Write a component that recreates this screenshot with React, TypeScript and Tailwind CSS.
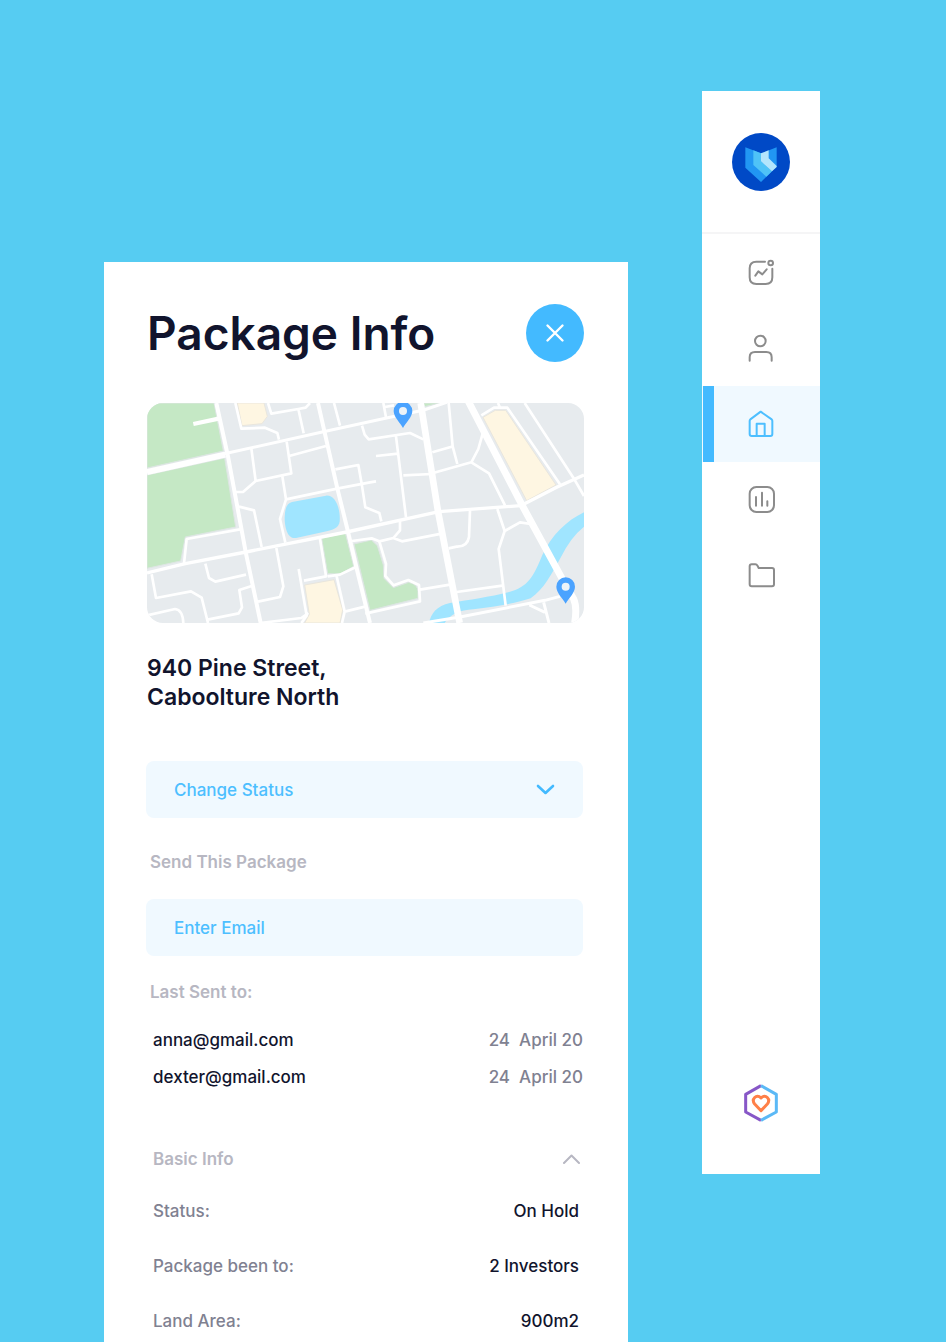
import React, { useState } from "react";

function Pin({ x, y }: { x: number; y: number }) {
  return (
    <g transform={`translate(${x} ${y})`}>
      <path d="M0 51C-8 35-28 19-28 0A28 28 0 0 1 28 0C28 19 8 35 0 51Z" fill="#4ba3ff" />
      <circle r="12" fill="#edf3f8" />
    </g>
  );
}

function StreetMap() {
  return (
    <svg viewBox="21 22 1311 660" className="block h-auto w-full rounded-2xl" role="img" aria-label="Map of Caboolture North">
      <rect x="21" y="22" width="1311" height="660" fill="#e7ebee" />
      <g fill="#c5e8c5" stroke="#dde6e2" strokeWidth="3">
        <path d="M21 22H222L250 166L21 217Z" />
        <path d="M21 238L254 187L287 394L136 424L122 496L21 518Z" />
        <path d="M545 428L616 412L641 512L600 535L563 534Z" />
        <path d="M642 445L694 433L712 450L730 508L732 548L760 576L806 560Q834 566 834 588V608L690 644Z" />
        <path d="M850 22H900L854 33Z" />
      </g>
      <g fill="#fef6e2" stroke="#e9e6dd" strokeWidth="3">
        <path d="M292 22H372L382 62L366 84L306 90Z" />
        <path d="M494 568L582 552L608 642L600 682H494L508 656Z" />
        <path d="M1029 65L1066 44H1097L1248 268L1160 315Z" />
      </g>
      <path d="M456 319L558 300C584 297 602 335 599 377C597 395 585 401 560 407L468 427C442 431 434 395 434 366Q434 324 456 319Z" fill="#a0e5ff" />
      <path d="M1332 350C1280 375 1235 418 1207 478C1180 545 1162 574 1110 588C1045 605 990 611 930 622C890 630 872 655 867 682H914C930 656 960 643 1000 641C1070 631 1130 623 1172 608C1212 580 1235 535 1263 484Q1292 425 1332 393Z" fill="#a0e5ff" />
      <g fill="none" stroke="#fff" strokeLinejoin="round" strokeWidth="8">
        <path d="M229 22L264 182L318 474L362 682" strokeWidth="12" />
        <path d="M21 227L260 173L550 108L750 65L852 43L920 20" strokeWidth="9" />
        <path d="M21 229L256 177" strokeWidth="18" />
        <path d="M160 85L236 69" strokeWidth="13" />
        <path d="M21 532L136 504L318 469L620 409L897 348L1142 330L1250 275L1332 238" strokeWidth="10" />
        <path d="M300 401L140 430L132 504" />
        <path d="M286 22L304 99L375 96L412 112L417 132" />
        <path d="M384 22L394 54L475 40L497 36L510 22M475 40L491 113" />
        <path d="M334 158L347 256L454 233L440 138M450 180L558 151M347 256L309 289H285M297 333L342 344L365 454" />
        <path d="M427 242L438 311L595 278L690 260L708 257M438 311L420 370L436 441" />
        <path d="M534 22L560 137L592 278L622 400L648 510L690 682" strokeWidth="12" />
        <path d="M582 22L600 90M666 90L674 117L686 131L810 112L850 131M768 122L798 365M708 181L774 174M790 239L876 235" />
        <path d="M586 221L655 208L665 264L676 335L718 352L724 377M636 436L695 428L718 437L760 427L786 437L905 414M780 377V404L762 425" />
        <path d="M718 437L738 505L736 541L761 569L805 553L837 568L840 617L676 654M840 582L930 567M950 589L1087 570" />
        <path d="M539 424L558 542L492 555M476 520L500 660L484 682M563 542L600 537L648 514M590 542L614 648L606 682M614 648L678 632M360 682L484 667L505 652" />
        <path d="M196 504L207 547L226 558L318 537M409 457L430 572L420 604L354 618M335 571L298 583L306 635L296 653L203 672M35 536L48 607L153 587L185 606L204 682M21 659L105 640Q128 642 130 682" />
        <path d="M730 22L738 65M735 34L762 29M877 170L940 152M926 22L938 152L952 205M882 231L994 200L1015 160L1028 114M994 200L1047 233L1095 329" />
        <path d="M990 344L987 424Q982 454 950 453L926 458M1072 340L1094 406L1076 460L1097 630M1094 406L1140 380L1172 385" />
        <path d="M850 682L960 664L1215 614L1260 602M1168 628L1215 650M1211 620L1227 682" strokeWidth="9" />
        <path d="M842 22L894 347L959 682" strokeWidth="20" />
        <path d="M984 15L1147 330L1268 552L1301 610Q1312 635 1304 682" strokeWidth="21" />
        <path d="M1024 59L1062 36H1102L1260 266M1154 22L1300 246L1332 301M1074 22L1080 36" />
      </g>
      <Pin x={789} y={46} />
      <Pin x={1277} y={573} />
    </svg>
  );
}

const navItems = [
  {
    label: "Activity",
    drawing: (
      <>
        <path d="M54 11H28Q8 11 8 31V58Q8 78 28 78H56Q76 78 76 58V32" />
        <circle cx="71" cy="15" r="7" />
        <path d="M25 53L34 40L46 49L59 34" />
      </>
    ),
  },
  {
    label: "Profile",
    drawing: (
      <>
        <circle cx="40" cy="21" r="16" />
        <path d="M8 80V70Q8 54 24 54H58Q74 54 74 70V80" />
      </>
    ),
  },
  {
    label: "Home",
    drawing: (
      <>
        <path d="M41 5L74 28Q76 30 76 33V72Q76 78 70 78H14Q8 78 8 72V33Q8 30 10 28Z" />
        <path d="M29 78V41H53V78" />
      </>
    ),
  },
  {
    label: "Reports",
    drawing: (
      <>
        <rect x="8" y="3" width="73" height="75" rx="20" />
        <path d="M27 33V59M45 20V59M61 46V59" />
      </>
    ),
  },
  {
    label: "Files",
    drawing: <path d="M14 7H25Q29 7 32 12L35 18H75Q81 18 81 24V67Q81 73 75 73H14Q8 73 8 67V13Q8 7 14 7Z" />,
  },
];

function Sidebar() {
  const [active, setActive] = useState("Home");
  return (
    <nav aria-label="Main" className="mt-[91px] mb-[168px] flex w-[118px] shrink-0 flex-col bg-white">
      <div className="flex justify-center border-b-2 border-[#f5f5f6] pt-[42px] pb-[41px]">
        <a href="#" aria-label="Dashboard">
          <svg viewBox="0 0 174 174" className="size-[58px]">
            <circle cx="87" cy="87" r="87" fill="#0049c6" />
            <path d="M40 43L87 61L134 43V101L87 147L40 104Z" fill="#2196f3" />
            <path d="M64 52L87 61V84L120 115L103 131L64 96Z" fill="#4fc3f7" />
            <path d="M87 61L110 52V76L134 99V102L120 115L87 85Z" fill="#b3e5fc" />
          </svg>
        </a>
      </div>
      <ul>
        {navItems.map((item) => {
          const on = item.label === active;
          return (
            <li key={item.label}>
              <button
                type="button"
                aria-label={item.label}
                aria-current={on ? "page" : undefined}
                onClick={() => setActive(item.label)}
                className={
                  on
                    ? "relative flex h-[76px] w-full items-center justify-center bg-[#f0f9ff] text-[#4dbfff]"
                    : "relative flex h-[76px] w-full items-center justify-center text-[#8c8c8c]"
                }
              >
                {on && <span className="absolute inset-y-0 left-px w-[11px] bg-[#43baff]" />}
                <svg viewBox="0 0 84 84" className="size-7 overflow-visible" fill="none" stroke="currentColor" strokeWidth="6" strokeLinecap="round" strokeLinejoin="round">
                  {item.drawing}
                </svg>
              </button>
            </li>
          );
        })}
      </ul>
      <a href="#" aria-label="Favourites" className="mt-auto mb-[52px] self-center">
        <svg viewBox="0 0 108 114" className="h-[38px] w-9" fill="none" strokeWidth="9" strokeLinejoin="round">
          <path d="M54 5L8 31V84L54 109" stroke="#8757c7" />
          <path d="M54 5L100 31V84L54 109" stroke="#5bb9f6" />
          <path d="M54 80L35 60C24 46 40 28 54 42C68 28 84 46 73 60Z" stroke="#ff8048" />
        </svg>
      </a>
    </nav>
  );
}

const recipients = [
  { email: "anna@gmail.com", date: "24  April 20" },
  { email: "dexter@gmail.com", date: "24  April 20" },
];

const details = [
  { name: "Status:", value: "On Hold" },
  { name: "Package been to:", value: "2 Investors" },
  { name: "Land Area:", value: "900m2" },
];

function PackagePanel() {
  const [open, setOpen] = useState(true);
  return (
    <main className="mt-[262px] min-w-0 flex-1 bg-white pt-[42px] pb-2">
      <div className="pr-11 pl-[43px]">
        <header className="flex items-center justify-between">
          <h1 className="text-[46px] leading-[50px] font-semibold text-[#11142d]">Package Info</h1>
          <button type="button" aria-label="Close" className="flex size-[58px] items-center justify-center rounded-full bg-[#43baff]">
            <svg viewBox="0 0 20 20" className="size-5" fill="none" stroke="#fff" strokeWidth="2.4" strokeLinecap="round">
              <path d="M2.5 2.5L17.5 17.5M17.5 2.5L2.5 17.5" />
            </svg>
          </button>
        </header>
        <div className="mt-[41px]">
          <StreetMap />
        </div>
        <h2 className="mt-[31px] text-[23px] leading-[29px] font-semibold text-[#11142d]">
          940 Pine Street,
          <br />
          Caboolture North
        </h2>
      </div>

      <form className="mt-[49px] pr-[45px] pl-[42px]">
        <div className="relative">
          <select aria-label="Change Status" defaultValue="" className="block h-[57px] w-full appearance-none rounded-lg bg-[#f0f9ff] px-7 pt-[3px] text-[17px] font-medium text-[#4dbfff]">
            <option value="">Change Status</option>
            <option>On Hold</option>
          </select>
          <svg viewBox="0 0 20 12" className="pointer-events-none absolute top-[23px] right-7 h-3 w-5" fill="none" stroke="#43baff" strokeWidth="2.6" strokeLinecap="round" strokeLinejoin="round">
            <path d="M3 2L10.500 9L18 2" />
          </svg>
        </div>
        <label htmlFor="email" className="mt-8 block pl-1 text-[17px] leading-6 font-semibold text-[#b7b7c2]">
          Send This Package
        </label>
        <input
          id="email"
          type="email"
          placeholder="Enter Email"
          className="mt-[25px] block h-[57px] w-full rounded-lg bg-[#f0f9ff] px-7 pt-px text-[17px] font-medium text-[#4dbfff] placeholder:text-[#4dbfff]"
        />
      </form>

      <section className="mt-6 pr-[45px] pl-[46px] text-[17px] leading-6 font-medium">
        <h3 className="font-semibold text-[#b7b7c2]">Last Sent to:</h3>
        <ul className="mt-6 flex flex-col gap-[13px] pl-[3px]">
          {recipients.map((r) => (
            <li key={r.email} className="flex justify-between">
              <span className="text-[#11142d]">{r.email}</span>
              <span className="whitespace-pre text-[#808191]">{r.date}</span>
            </li>
          ))}
        </ul>
      </section>

      <section className="mt-[58px] pr-12 pl-[49px] text-[17px] leading-6 font-medium">
        <h3>
          <button type="button" aria-expanded={open} onClick={() => setOpen(!open)} className="flex w-full items-center justify-between font-semibold text-[#b7b7c2]">
            Basic Info
            <svg viewBox="0 0 18 12" className="h-3 w-[18px]" fill="none" stroke="currentColor" strokeWidth="2" strokeLinecap="round" strokeLinejoin="round">
              <path d="M2 10L9.500 2.500L17 10" />
            </svg>
          </button>
        </h3>
        {open && (
          <dl className="mt-7 flex flex-col gap-[31px] pr-px">
            {details.map((d) => (
              <div key={d.name} className="flex justify-between">
                <dt className="text-[#808191]">{d.name}</dt>
                <dd className="text-[#11142d]">{d.value}</dd>
              </div>
            ))}
          </dl>
        )}
      </section>
    </main>
  );
}

export default function App() {
  return (
    <div className="flex min-h-screen gap-[74px] bg-[#56ccf2] pr-[126px] pl-[104px] font-['Inter',sans-serif]">
      <PackagePanel />
      <Sidebar />
    </div>
  );
}
